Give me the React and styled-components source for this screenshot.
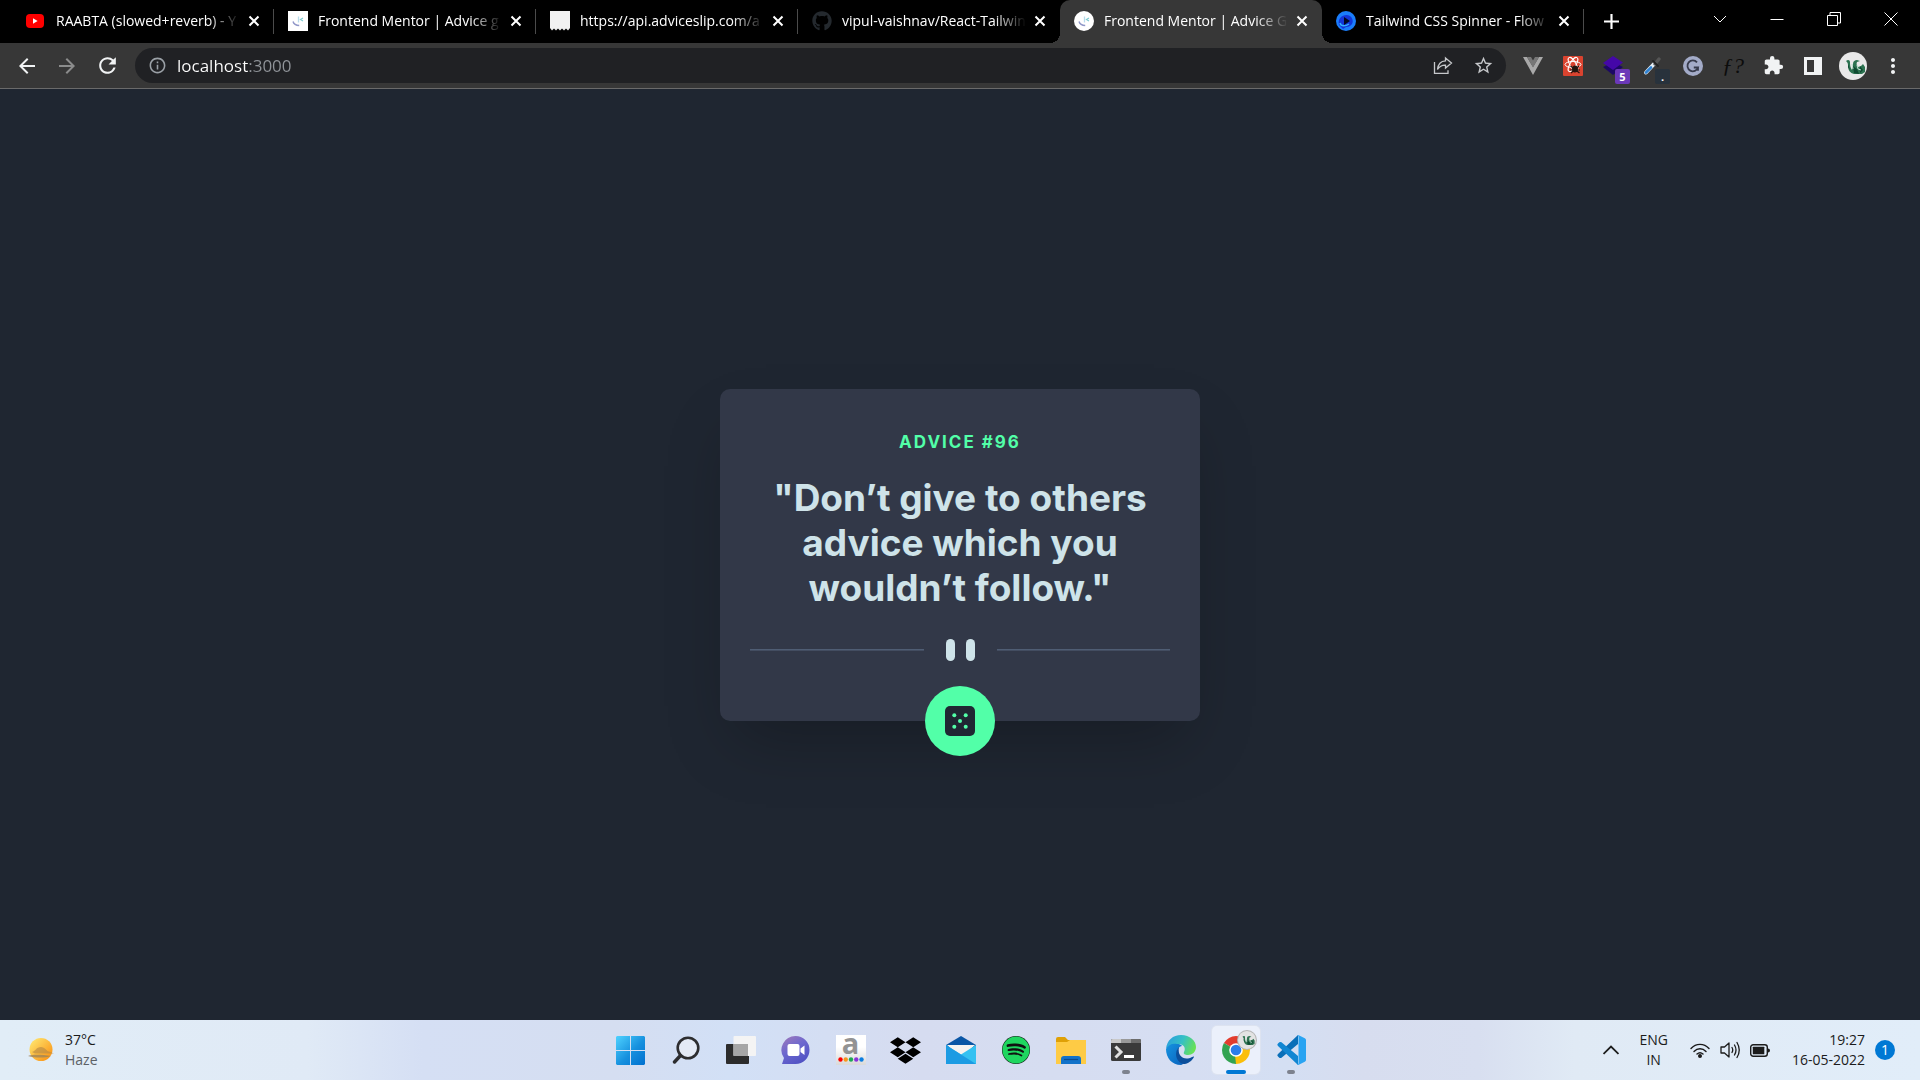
import React from "react";
import styled, { createGlobalStyle, css } from "styled-components";
import {
  MdArrowBack,
  MdArrowForward,
  MdRefresh,
  MdInfoOutline,
  MdStarBorder,
  MdExtension,
  MdMoreVert,
} from "react-icons/md";
import { FaGithub, FaDropbox, FaSpotify } from "react-icons/fa";

const uiFont = `"Open Sans", "Noto Sans", sans-serif`;
const cardFont = `Inter, "Open Sans", sans-serif`;

const GlobalStyle = createGlobalStyle`
  *, *::before, *::after { box-sizing: border-box; }
  body { margin: 0; background: #1f2631; font-family: ${uiFont}; }
  button { border: 0; padding: 0; background: none; color: inherit; font: inherit; cursor: pointer; }
  svg { display: block; flex: none; }
`;

const Screen = styled.div`
  display: flex;
  flex-direction: column;
  min-height: 100vh;
`;

/* ---------- tab strip ---------- */

const TabStrip = styled.header`
  display: flex;
  height: 43px;
  padding-left: 12px;
  background: #000;
  color: #fff;
`;

const TabList = styled.div`
  display: flex;
  min-width: 0;
`;

const Tab = styled.div`
  position: relative;
  display: flex;
  align-items: flex-start;
  width: 262px;
  min-width: 0;
  padding: 0 10px 0 14px;
  ${(p) =>
    p.$divider &&
    css`
      &::after {
        content: "";
        position: absolute;
        right: 0;
        top: 9px;
        width: 1px;
        height: 25px;
        background: #4b4b4b;
      }
    `}
  ${(p) =>
    p.$active &&
    css`
      background: #373737;
      border-radius: 10px 10px 0 0;
      &::before,
      &::after {
        content: "";
        position: absolute;
        bottom: 0;
        width: 10px;
        height: 10px;
      }
      &::before {
        right: 100%;
        background: radial-gradient(circle at 0 0, transparent 10px, #373737 10px);
      }
      &::after {
        left: 100%;
        background: radial-gradient(circle at 100% 0, transparent 10px, #373737 10px);
      }
    `}
`;

const TabTitle = styled.button`
  display: flex;
  flex: 1;
  align-items: center;
  gap: 10px;
  min-width: 0;
  height: 41px;
  font-size: 14px;
  text-align: left;
`;

const TabLabel = styled.span`
  flex: 1;
  white-space: nowrap;
  mask-image: linear-gradient(90deg, #000 calc(100% - 32px), transparent);
`;

const TabClose = styled.button`
  display: grid;
  place-items: center;
  width: 20px;
  height: 42px;
  margin-left: 4px;
`;

const NewTab = styled.button`
  display: grid;
  place-items: center;
  width: 36px;
  height: 42px;
  margin-left: 9px;
`;

const WindowControls = styled.div`
  display: flex;
  height: 37px;
  margin-left: auto;
  padding-right: 1px;
`;

const WindowButton = styled.button`
  display: grid;
  place-items: center;
  width: 57px;
`;

/* ---------- toolbar ---------- */

const Toolbar = styled.nav`
  display: flex;
  align-items: center;
  height: 46px;
  padding: 0 7px;
  background: #373737;
  border-bottom: 1px solid #6a6a6a;
  color: #f1f3f4;
`;

const ToolButton = styled.button`
  position: relative;
  display: grid;
  place-items: center;
  width: 40px;
  height: 40px;
  opacity: ${(p) => (p.disabled ? 0.45 : 1)};
`;

const AddressBar = styled.div`
  display: flex;
  flex: 1;
  align-items: center;
  height: 35px;
  margin: 0 7px 0 8px;
  padding: 0 3px 0 13px;
  border-radius: 18px;
  background: #202124;
  color: #c6c8cb;
`;

const SiteInfo = styled.button`
  color: #9aa0a6;
`;

const AddressInput = styled.input`
  flex: 1;
  min-width: 0;
  margin-left: 10px;
  padding: 0;
  border: 0;
  outline: 0;
  font-family: ${uiFont};
  font-size: 17px;
  color: transparent;
  background: linear-gradient(90deg, #fff 72px, #909499 72px);
  background-clip: text;
`;

const BadgeCount = styled.span`
  position: absolute;
  left: 22px;
  top: 23px;
  width: 15px;
  height: 15px;
  border-radius: 2px;
  background: ${(p) => p.$color};
  color: #fff;
  font-size: 11px;
  font-weight: 700;
  line-height: 15px;
  text-align: center;
`;

const FontGlyph = styled.span`
  color: #0c0c0c;
  font-family: "Liberation Serif", serif;
  font-size: 22px;
  font-style: italic;
  line-height: 1;
`;

/* ---------- page ---------- */

const Page = styled.main`
  display: grid;
  flex: 1;
  place-items: center;
  background: #1f2631;
`;

const Card = styled.article`
  position: relative;
  display: flex;
  flex-direction: column;
  align-items: center;
  width: 480px;
  padding: 39px 30px 60px;
  border-radius: 10px;
  background: #323848;
  box-shadow: 0 31px 62px -15px rgba(0, 0, 0, 0.25);
  font-family: ${cardFont};
  text-align: center;
`;

const AdviceNumber = styled.h1`
  margin: 0 0 19px;
  color: #52ffa8;
  font-size: 17px;
  font-weight: 700;
  letter-spacing: 2px;
  line-height: 28px;
`;

const Quote = styled.p`
  margin: 0 0 29px;
  color: #cee3e9;
  font-size: 37px;
  font-weight: 700;
  line-height: 45px;
`;

const Divider = styled.div`
  display: flex;
  align-items: center;
  align-self: stretch;
  gap: 22px;
  height: 22px;
`;

const Rule = styled.span`
  flex: 1;
  height: 2px;
  background: linear-gradient(#4f5d74 50%, #434d61 50%);
`;

const Bars = styled.span`
  display: flex;
  gap: 11px;
  &::before,
  &::after {
    content: "";
    width: 9px;
    height: 22px;
    border-radius: 5px;
    background: #cee3e9;
  }
`;

const DiceButton = styled.button`
  position: absolute;
  left: calc(50% - 35px);
  bottom: -35px;
  display: grid;
  place-items: center;
  width: 70px;
  height: 70px;
  border-radius: 50%;
  background: #52ffa8;
`;

/* ---------- taskbar ---------- */

const Taskbar = styled.footer`
  display: grid;
  grid-template-columns: 1fr auto 1fr;
  align-items: center;
  height: 60px;
  background: linear-gradient(90deg, #e1edf7 0%, #e0eaf6 16%, #d5dff4 22%, #d5def1 32%, #d2e0f6 38%, #d6dcf0 48%, #d6def2 62%, #d4dff3 67%, #d7ddef 71%, #d8dff0 77%, #e0eaf5 82%, #e1edf9 100%);
  color: #1b1b1b;
  line-height: 20px;
`;

const Weather = styled.button`
  display: flex;
  align-items: center;
  justify-self: start;
  gap: 11px;
  padding-left: 28px;
  text-align: left;
`;

const Lines = styled.span`
  display: flex;
  flex-direction: column;
  font-size: 14px;
  line-height: 20px;
  text-align: ${(p) => p.$align || "left"};
`;

const Muted = styled.span`
  color: #5c6166;
`;

const Apps = styled.div`
  display: flex;
  gap: 7px;
  padding-left: 1px;
`;

const AppButton = styled.button`
  position: relative;
  display: grid;
  place-items: center;
  width: 48px;
  height: 48px;
  border-radius: 5px;
  ${(p) =>
    p.$state === "active" &&
    css`
      background: #ebf0fb;
      box-shadow: 0 0 0 1px #dde3f0;
    `}
  ${(p) =>
    p.$state &&
    css`
      &::after {
        content: "";
        position: absolute;
        bottom: 0;
        left: 50%;
        width: ${p.$state === "active" ? "20px" : "8px"};
        height: 4px;
        border-radius: 2px;
        background: ${p.$state === "active" ? "#0078d4" : "#7d828e"};
        transform: translateX(-50%);
      }
    `}
`;

const ShopTile = styled.span`
  display: flex;
  flex-direction: column;
  align-items: center;
  gap: 6px;
  width: 30px;
  height: 30px;
  background: linear-gradient(#fff 40%, #d9d9d9);
  color: #939393;
  font-size: 29px;
  font-weight: 700;
  line-height: 16px;
`;

const Tray = styled.div`
  display: flex;
  align-items: center;
  justify-self: end;
  padding-right: 25px;
`;

const TrayButton = styled.button`
  display: flex;
  align-items: center;
  gap: 10px;
  margin-right: ${(p) => p.$after || 0}px;
`;

const Notice = styled.span`
  width: 20px;
  height: 20px;
  border-radius: 50%;
  background: #0078d4;
  color: #fff;
  font-size: 14px;
  line-height: 20px;
  text-align: center;
`;

/* ---------- drawings ---------- */

const Cross = () => (
  <svg width="12" height="12" viewBox="0 0 12 12" stroke="#fff" strokeWidth="2">
    <path d="M1.5 1.5l9 9M10.5 1.5l-9 9" />
  </svg>
);

const YouTube = () => (
  <svg width="20" height="20" viewBox="0 0 20 20">
    <rect x="0" y="3" width="18" height="14" rx="4" fill="#f00" />
    <path d="M7 7.3v5.4l4.600-2.700z" fill="#fff" />
  </svg>
);

const Mentor = ({ round }) => (
  <svg width="20" height="20" viewBox="0 0 20 20" fill="none">
    <rect width="20" height="20" rx={round ? 10 : 0} fill="#fff" />
    <path d="M5 10.500c.8 2.600 3 3.900 6.200 4" stroke="#8f96c8" strokeWidth="1.400" />
    <path d="M10.500 5.500v6" stroke="#b9dcec" strokeWidth="1.300" />
    <path d="M15 7l-2.500 1.500L15 10" stroke="#7fcbd0" strokeWidth="1.200" />
  </svg>
);

const Slip = () => (
  <svg width="20" height="20" viewBox="0 0 20 20">
    <path d="M0 0h20v17l-2 2.500-2-2-2 2-2-2-2 2-2-2-2 2-2-2-2 2-2-2.500z" fill="#f1f1f1" />
  </svg>
);

const Flow = () => (
  <svg width="20" height="20" viewBox="0 0 20 20">
    <circle cx="10" cy="10" r="10" fill="#1a7dfb" />
    <path d="M3 14C1 6 9 2 14 5c5 4 3 11-4 11l-3 2z" fill="#1335d8" />
    <path d="M4 12c1 4 6 3 9 1" stroke="#33b1ff" strokeWidth="1.500" fill="none" />
    <path d="M8 6v8l6-4z" fill="#020824" />
  </svg>
);

const Share = () => (
  <svg width="20" height="20" viewBox="0 0 20 20" fill="none" stroke="currentColor" strokeWidth="1.300">
    <path d="M1.500 6v11.300h13.500v-3" />
    <path d="M12.500 2l6 5-6 5V9.200C9 9 6.500 10.500 4.500 13.500 5 8.500 8 5 12.500 4.800z" />
  </svg>
);

const Vue = () => (
  <svg width="20" height="18" viewBox="0 0 20 18">
    <path d="M0 0h4l6 10 6-10h4L10 18z" fill="#a9a9a9" />
    <path d="M4 0h4l2 3.500L12 0h4l-6 10.500z" fill="#777" />
  </svg>
);

const ReactTool = () => (
  <svg width="20" height="20" viewBox="0 0 20 20" fill="none">
    <rect width="20" height="20" rx="1" fill="#d9432f" />
    <g stroke="#fff" strokeWidth="1">
      <ellipse cx="10" cy="8.500" rx="8" ry="3" />
      <ellipse cx="10" cy="8.500" rx="8" ry="3" transform="rotate(60 10 8.500)" />
      <ellipse cx="10" cy="8.500" rx="8" ry="3" transform="rotate(120 10 8.500)" />
    </g>
    <ellipse cx="12" cy="13" rx="3" ry="3.600" fill="#24150f" />
    <path d="M7.500 10l9 7M7 14h10M8 17l8-7" stroke="#24150f" strokeWidth="1.200" />
  </svg>
);

const Layers = () => (
  <svg width="20" height="20" viewBox="0 0 20 20">
    <path d="M0 11l10 8 10-8-10-5z" fill="#1c0865" />
    <path d="M0 7l10-7 10 6.500L10 14z" fill="#4407a8" />
  </svg>
);

const Dropper = () => (
  <svg width="20" height="20" viewBox="0 0 20 20" fill="none" strokeLinecap="round">
    <path d="M3 16.500l8-8.500" stroke="#e6eef5" strokeWidth="4" />
    <path d="M3 16.500l5-5" stroke="#2f82d2" strokeWidth="2.600" />
    <path d="M12 8l4-5" stroke="#555" strokeWidth="3.500" />
    <path d="M10 5l5 5" stroke="#222" strokeWidth="1.800" />
  </svg>
);

const Grammar = () => (
  <svg width="20" height="20" viewBox="0 0 20 20" fill="none" stroke="#373b4c" strokeWidth="1.800">
    <circle cx="10" cy="10" r="10" fill="#a3abc8" stroke="none" />
    <path d="M14 6.400a5.400 5.400 0 1 0 1 5.100h-4.200M15 11.500v3.200" />
  </svg>
);

const SidePanel = () => (
  <svg width="18" height="18" viewBox="0 0 18 18">
    <path fillRule="evenodd" d="M0 0h18v18H0zM3 3v12h7V3z" fill="#f1f3f4" />
  </svg>
);

const Dragon = () => (
  <>
    <path d="M7 9c2-2 4-1 4 1 0 3 0 5 2 8l1-6c0-3 2-4 4-4l3 1-3 1c-1 2 0 4 1 5l3-1 2-2 2 3v5l-3 2h-8c-4-1-6-4-6-8 0-2 0-3-2-5z" fill="#2d7351" />
    <path d="M14 14l4 3 2 5-5-1zM21 14l3 4-3 3zM9 12l2 6-2-3z" fill="#0f4a31" />
    <path d="M13 12l1 5M18 13l1 4 3 1" stroke="#bfe0cf" strokeWidth="1" fill="none" />
  </>
);

const Avatar = ({ size }) => (
  <svg width={size} height={size} viewBox="0 0 28 28">
    <circle cx="14" cy="14" r="14" fill="#e9e9e9" />
    <Dragon />
  </svg>
);

const Dice = () => (
  <svg width="30" height="30" viewBox="0 0 30 30">
    <rect width="30" height="30" rx="5" fill="#202733" />
    <g fill="#52ffa8">
      <circle cx="9.300" cy="9.300" r="2" />
      <circle cx="20.700" cy="9.300" r="2" />
      <circle cx="15" cy="15" r="2" />
      <circle cx="9.300" cy="20.700" r="2" />
      <circle cx="20.700" cy="20.700" r="2" />
    </g>
  </svg>
);

const Sun = () => (
  <svg width="26" height="26" viewBox="0 0 26 26">
    <defs>
      <linearGradient id="sun" x1="0" y1="0" x2="1" y2="1">
        <stop offset="0.100" stopColor="#ffe36b" />
        <stop offset="1" stopColor="#f98a0c" />
      </linearGradient>
    </defs>
    <circle cx="13" cy="12.500" r="11.500" fill="url(#sun)" />
    <path d="M4 15c4-1 4-5 9-5 4 0 5 4 8 4.500l5 2H7z" fill="#b98a45" opacity="0.650" />
    <path d="M0 19c6-2 15-1 23 0-6 2-16 2-23 0z" fill="#a08458" opacity="0.800" />
  </svg>
);

const Start = () => (
  <svg width="29" height="29" viewBox="0 0 29 29">
    <defs>
      <linearGradient id="start" gradientUnits="userSpaceOnUse" x1="0" y1="0" x2="29" y2="29">
        <stop offset="0" stopColor="#4fd2ff" />
        <stop offset="0.550" stopColor="#1690de" />
        <stop offset="1" stopColor="#0070cf" />
      </linearGradient>
    </defs>
    <path d="M1 0h13v14H0V1zM15 0h13l1 1v13H15zM0 15h14v14H1l-1-1zM15 15h14v13l-1 1H15z" fill="url(#start)" />
  </svg>
);

const Search = () => (
  <svg width="28" height="28" viewBox="0 0 28 28" fill="none" stroke="#2d2d2f" strokeLinecap="round">
    <circle cx="16" cy="12" r="10.300" strokeWidth="2.600" fill="#e4eaf5" />
    <path d="M8.500 19.500l-6 6.500" strokeWidth="3.400" />
  </svg>
);

const TaskView = () => (
  <svg width="30" height="28" viewBox="0 0 30 28">
    <rect y="8" width="23" height="20" rx="1" fill="#2c2c2c" />
    <rect x="7.500" width="22.500" height="20" rx="1" fill="#f4f4f4" />
    <path d="M7.500 8H22v12H7.500z" fill="#a6a6a6" />
  </svg>
);

const Chat = () => (
  <svg width="29" height="29" viewBox="0 0 29 29">
    <defs>
      <linearGradient id="chat" x1="0" y1="0" x2="0.600" y2="1">
        <stop offset="0" stopColor="#a37ab8" />
        <stop offset="0.500" stopColor="#6d68cf" />
        <stop offset="1" stopColor="#5253c4" />
      </linearGradient>
    </defs>
    <path d="M14.500 0a14 14 0 0 1 0 28H1l2-6A14 14 0 0 1 14.500 0z" fill="url(#chat)" />
    <rect x="6.500" y="8" width="12" height="12" rx="2" fill="#fff" />
    <path d="M19.500 12.500l4-3v9.500l-4-3z" fill="#fff" />
  </svg>
);

const ShopDots = () => (
  <svg width="26" height="5" viewBox="0 0 26 5">
    {["#f00", "#f7971d", "#1fa855", "#8a35d8", "#0b7de0"].map((c, i) => (
      <circle key={c} cx={2.500 + i * 5.250} cy="2.500" r="2.200" fill={c} />
    ))}
  </svg>
);

const Mail = () => (
  <svg width="30" height="28" viewBox="0 0 30 28">
    <path d="M0 9L15 0l15 9v6H0z" fill="#0a56a5" />
    <path d="M1 9h28L15 22z" fill="#f6f3f0" />
    <path d="M0 9l15 9.500L30 9v19H0z" fill="#35c1f1" />
    <path d="M0 9l30 19H0z" fill="#1c9be3" />
  </svg>
);

const Spotify = styled.span`
  display: grid;
  place-items: center;
  border-radius: 50%;
  background: #111;
  color: #1fd65f;
`;

const Folder = () => (
  <svg width="30" height="27" viewBox="0 0 30 27">
    <path d="M0 2q0-2 2-2h7l3 3h16q2 0 2 2v8H0z" fill="#dfa006" />
    <path d="M0 5h11l3-2h16v24H0z" fill="#fecb45" />
    <path d="M5 27v-5q0-3 3-3h14q3 0 3 3v5z" fill="#1272c9" />
    <path d="M8 22.500h14" stroke="#0a4b8f" strokeWidth="1.200" />
  </svg>
);

const Terminal = () => (
  <svg width="30" height="22" viewBox="0 0 30 22" fill="none">
    <rect width="30" height="22" rx="1.500" fill="#3a3a3a" />
    <path d="M0 4V1.500Q0 0 1.500 0H10v4z" fill="#c9c9c9" />
    <path d="M10 0h10v4H10z" fill="#999" />
    <path d="M20 0h8.500Q30 0 30 1.500V4H20z" fill="#6c6c6c" />
    <path d="M4.500 7.500l5.500 5.500-5.500 5.500" stroke="#e0e0e0" strokeWidth="3" />
    <path d="M13 17.500h10" stroke="#fff" strokeWidth="3" />
  </svg>
);

const Edge = () => (
  <svg width="30" height="30" viewBox="0 0 30 30">
    <defs>
      <linearGradient id="edgeTop" x1="0" y1="0.300" x2="1" y2="0.600">
        <stop offset="0" stopColor="#2a9fdd" />
        <stop offset="0.500" stopColor="#35c0c5" />
        <stop offset="1" stopColor="#6be34f" />
      </linearGradient>
      <linearGradient id="edgeLow" x1="0" y1="0" x2="1" y2="1">
        <stop offset="0" stopColor="#1593e0" />
        <stop offset="1" stopColor="#0a62bd" />
      </linearGradient>
    </defs>
    <path d="M0 14C1 5 7 0 15 0c9 0 15 6 15 12 0 5-4 8-8 8-3 0-5-1-4-3 2-4 0-8-6-8-6 0-11 3-12 5z" fill="url(#edgeTop)" />
    <path d="M0 14c2-4 6-6 11-5 4 0 5 2 5 2-6 1-8 11 2 16 0 0-1 3-3 3C6 30 0 23 0 14z" fill="url(#edgeLow)" />
    <path d="M13 12c-6 6-2 17 6 17 5-1 8-5 9-7 0-1-1 0-2 0-7 4-15 0-13-10z" fill="#0c4f9c" />
  </svg>
);

const Chrome = () => (
  <svg width="42" height="42" viewBox="0 0 42 42">
    <g transform="translate(7 7)">
      <path d="M14 14L1.900 7A14 14 0 0 1 26.100 7z" fill="#e23c2e" />
      <path d="M14 14L26.100 7A14 14 0 0 1 14 28z" fill="#fbbf0a" />
      <path d="M14 14L14 28A14 14 0 0 1 1.900 7z" fill="#32a351" />
      <path d="M14 7h12.100l-6 3z" fill="#e23c2e" />
      <path d="M20 17.500L14 28l-1-9z" fill="#fbbf0a" />
      <circle cx="14" cy="14" r="6.800" fill="#fff" />
      <circle cx="14" cy="14" r="5.300" fill="#2b7de9" />
    </g>
    <g transform="translate(22 1)">
      <circle cx="10" cy="10" r="10" fill="#b4b4b4" />
      <g transform="translate(1 1) scale(0.640)">
        <circle cx="14" cy="14" r="14" fill="#e3e3e3" />
        <Dragon />
      </g>
    </g>
  </svg>
);

const Code = () => (
  <svg width="30" height="30" viewBox="0 0 30 30">
    <path d="M22 0l-20 19q-1.500 1.200 0 2.500l1.300 1.200q1 .8 2.200 0L22 9z" fill="#0a6fb8" />
    <path d="M22 30L2 11q-1.500-1.200 0-2.500l1.300-1.200q1-.8 2.200 0L22 21z" fill="#1186d2" />
    <path d="M21 0.300q.8-.5 1.800 0l6 3Q30 4 30 5v20q0 1-1.200 1.700l-6 3q-1 .5-1.800-.2 1.500.5 1.500-1.500V2q0-2-1.500-1.700z" fill="#29a4f2" />
  </svg>
);

const Wifi = () => (
  <svg width="20" height="15" viewBox="0 0 20 15" fill="none" stroke="#1b1b1b" strokeWidth="1.400" strokeLinecap="round">
    <path d="M1 5.500c5-5.500 13-5.500 18 0M4 8.500c3.500-3.600 8.500-3.600 12 0M7 11c2-1.800 4-1.800 6 0" />
    <circle cx="10" cy="13" r="1.300" fill="#1b1b1b" />
  </svg>
);

const Sound = () => (
  <svg width="20" height="18" viewBox="0 0 20 18" fill="none" stroke="#1b1b1b" strokeWidth="1.300" strokeLinecap="round" strokeLinejoin="round">
    <path d="M1 6h3.500L9 2v14l-4.500-4H1z" />
    <path d="M12 6.500q1.500 2.500 0 5M14.500 4q3 5 0 10M17 1.500q4.500 7.500 0 15" />
  </svg>
);

const Battery = () => (
  <svg width="20" height="13" viewBox="0 0 20 13">
    <rect x="0.700" y="0.700" width="16.600" height="11.600" rx="2.500" fill="none" stroke="#1b1b1b" strokeWidth="1.400" />
    <rect x="2.800" y="2.800" width="11.500" height="7.400" rx="0.500" fill="#1b1b1b" />
    <path d="M18 4.500q2 0 2 2t-2 2z" fill="#1b1b1b" />
  </svg>
);

const LineIcon = ({ d, size = 14, width = 1 }) => (
  <svg width={size} height={size} viewBox="0 0 14 14" fill="none" stroke="currentColor" strokeWidth={width}>
    <path d={d} />
  </svg>
);

/* ---------- content ---------- */

const tabs = [
  { title: "RAABTA (slowed+reverb) - Y", icon: <YouTube />, divider: true },
  { title: "Frontend Mentor | Advice g", icon: <Mentor />, divider: true },
  { title: "https://api.adviceslip.com/a", icon: <Slip />, divider: true },
  { title: "vipul-vaishnav/React-Tailwin", icon: <FaGithub size={20} color="#24292e" /> },
  { title: "Frontend Mentor | Advice G", icon: <Mentor round />, active: true },
  { title: "Tailwind CSS Spinner - Flow", icon: <Flow />, divider: true },
];

const extensions = [
  { name: "Vue", icon: <Vue /> },
  { name: "React tools", icon: <ReactTool /> },
  { name: "Layers", icon: <Layers />, badge: "5", color: "#6b38b8" },
  { name: "Colour picker", icon: <Dropper />, badge: ".", color: "#28323c" },
  { name: "Grammar", icon: <Grammar /> },
  { name: "Font finder", icon: <FontGlyph>ƒ?</FontGlyph> },
  { name: "Extensions", icon: <MdExtension size={21} /> },
  { name: "Side panel", icon: <SidePanel /> },
  { name: "Profile", icon: <Avatar size={28} /> },
  { name: "Menu", icon: <MdMoreVert size={24} /> },
];

const apps = [
  { name: "Start", icon: <Start /> },
  { name: "Search", icon: <Search /> },
  { name: "Task view", icon: <TaskView /> },
  { name: "Chat", icon: <Chat /> },
  { name: "Amazon", icon: <ShopTile>a<ShopDots /></ShopTile> },
  { name: "Dropbox", icon: <FaDropbox size={31} color="#000" /> },
  { name: "Mail", icon: <Mail /> },
  { name: "Spotify", icon: <Spotify><FaSpotify size={28} /></Spotify> },
  { name: "Files", icon: <Folder /> },
  { name: "Terminal", icon: <Terminal />, state: "open" },
  { name: "Edge", icon: <Edge /> },
  { name: "Chrome", icon: <Chrome />, state: "active" },
  { name: "Code", icon: <Code />, state: "open" },
];

export default function App() {
  return (
    <Screen>
      <GlobalStyle />
      <TabStrip>
        <TabList>
          {tabs.map((t) => (
            <Tab key={t.title} $active={t.active} $divider={t.divider}>
              <TabTitle>
                {t.icon}
                <TabLabel>{t.title}</TabLabel>
              </TabTitle>
              <TabClose aria-label="Close tab"><Cross /></TabClose>
            </Tab>
          ))}
        </TabList>
        <NewTab aria-label="New tab"><LineIcon d="M7 0v14M0 7h14" size={15} width={2} /></NewTab>
        <WindowControls>
          <WindowButton aria-label="Search tabs"><LineIcon d="M1 4l6 6 6-6" /></WindowButton>
          <WindowButton aria-label="Minimise"><LineIcon d="M0.500 7.500h13" /></WindowButton>
          <WindowButton aria-label="Restore"><LineIcon d="M0.500 3.500h10v10h-10zM3 3.500V0.500h10.500V11H10.500" /></WindowButton>
          <WindowButton aria-label="Close"><LineIcon d="M0.500 0.500l13 13M13.500 0.500l-13 13" /></WindowButton>
        </WindowControls>
      </TabStrip>

      <Toolbar>
        <ToolButton aria-label="Back"><MdArrowBack size={24} /></ToolButton>
        <ToolButton aria-label="Forward" disabled><MdArrowForward size={24} /></ToolButton>
        <ToolButton aria-label="Reload"><MdRefresh size={25} /></ToolButton>
        <AddressBar>
          <SiteInfo aria-label="Site information"><MdInfoOutline size={19} /></SiteInfo>
          <AddressInput aria-label="Address" defaultValue="localhost:3000" />
          <ToolButton aria-label="Share"><Share /></ToolButton>
          <ToolButton aria-label="Bookmark"><MdStarBorder size={21} /></ToolButton>
        </AddressBar>
        {extensions.map((e) => (
          <ToolButton key={e.name} aria-label={e.name}>
            {e.icon}
            {e.badge && <BadgeCount $color={e.color}>{e.badge}</BadgeCount>}
          </ToolButton>
        ))}
      </Toolbar>

      <Page>
        <Card>
          <AdviceNumber>ADVICE #96</AdviceNumber>
          <Quote>"Don’t give to others advice which you wouldn’t follow."</Quote>
          <Divider><Rule /><Bars /><Rule /></Divider>
          <DiceButton aria-label="New advice"><Dice /></DiceButton>
        </Card>
      </Page>

      <Taskbar>
        <Weather>
          <Sun />
          <Lines>
            <span>37°C</span>
            <Muted>Haze</Muted>
          </Lines>
        </Weather>
        <Apps>
          {apps.map((a) => (
            <AppButton key={a.name} aria-label={a.name} $state={a.state}>{a.icon}</AppButton>
          ))}
        </Apps>
        <Tray>
          <TrayButton aria-label="Hidden icons" $after={20}><LineIcon d="M0.500 10.500L7 4l6.500 6.500" size={16} width={1.500} /></TrayButton>
          <TrayButton $after={22}>
            <Lines $align="center"><span>ENG</span><span>IN</span></Lines>
          </TrayButton>
          <TrayButton aria-label="Network, sound, battery" $after={22}>
            <Wifi />
            <Sound />
            <Battery />
          </TrayButton>
          <TrayButton>
            <Lines $align="right"><span>19:27</span><span>16-05-2022</span></Lines>
            <Notice>1</Notice>
          </TrayButton>
        </Tray>
      </Taskbar>
    </Screen>
  );
}
